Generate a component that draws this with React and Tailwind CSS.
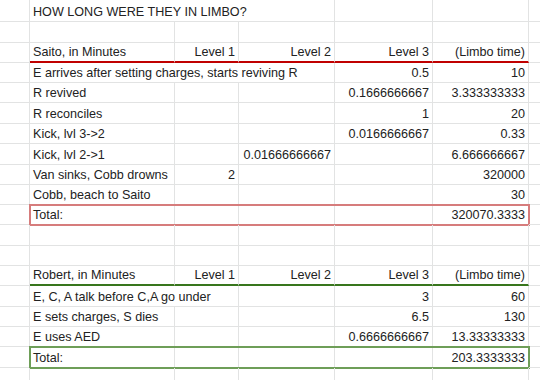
import clsx from "clsx";

// column widths incl. the 1px right gridline
const A = "w-[30px]";
const B = "w-[145px]";
const C = "w-[64px]";
const D = "w-[96px]";
const E = "w-[98px]";
const F = "w-[96px]";
const G = "w-[60px]";

function Cell({ w, right, className = "", children }) {
  return (
    <div
      className={clsx(
        "flex shrink-0 items-end overflow-hidden whitespace-nowrap border-b border-r border-[#e2e3e3] px-[3px] pb-px leading-[15px]",
        w,
        right && "justify-end",
        className
      )}
    >
      {children}
    </div>
  );
}

function Row({ h, children }) {
  return <div className={clsx("flex", h)}>{children}</div>;
}

function EmptyRow({ h }) {
  return (
    <Row h={h}>
      <Cell w={A} />
      <Cell w={B} />
      <Cell w={C} />
      <Cell w={D} />
      <Cell w={E} />
      <Cell w={F} />
      <Cell w={G} />
    </Row>
  );
}

function HeaderRow({ h, title, line }) {
  return (
    <Row h={h}>
      <Cell w={A} />
      <Cell w={B} className={line}>{title}</Cell>
      <Cell w={C} right className={line}>Level 1</Cell>
      <Cell w={D} right className={line}>Level 2</Cell>
      <Cell w={E} right className={line}>Level 3</Cell>
      <Cell w={F} right className={line}>(Limbo time)</Cell>
      <Cell w={G} />
    </Row>
  );
}

function DataRow({ h, label, span, l1, l2, l3, limbo }) {
  return (
    <Row h={h}>
      <Cell w={A} />
      {span === "BD" && <Cell w="w-[305px]">{label}</Cell>}
      {span === "BC" && (
        <>
          <Cell w="w-[209px]">{label}</Cell>
          <Cell w={D} right>{l2}</Cell>
        </>
      )}
      {!span && (
        <>
          <Cell w={B}>{label}</Cell>
          <Cell w={C} right>{l1}</Cell>
          <Cell w={D} right>{l2}</Cell>
        </>
      )}
      <Cell w={E} right>{l3}</Cell>
      <Cell w={F} right>{limbo}</Cell>
      <Cell w={G} />
    </Row>
  );
}

function TotalRow({ h, value, ring }) {
  return (
    <Row h={h}>
      <Cell w={A} />
      <div className={clsx("flex outline-2 -outline-offset-1", ring)}>
        <Cell w={B}>Total:</Cell>
        <Cell w={C} />
        <Cell w={D} />
        <Cell w={E} />
        <Cell w={F} right>{value}</Cell>
      </div>
      <Cell w={G} />
    </Row>
  );
}

export default function App() {
  const red = "border-b-2 border-b-[#c00000]";
  const green = "border-b-2 border-b-[#38761d]";
  return (
    <div className="h-[380px] w-[540px] overflow-hidden bg-white font-['Liberation_Sans',Arial,sans-serif] text-[12.6px] text-[#222]">
      {/* title */}
      <Row h="h-[22px]">
        <Cell w={A} />
        <Cell w="w-[305px]">HOW LONG WERE THEY IN LIMBO?</Cell>
        <Cell w={E} />
        <Cell w={F} />
        <Cell w={G} />
      </Row>
      <EmptyRow h="h-[21px]" />

      {/* Saito */}
      <HeaderRow h="h-[20px]" title="Saito, in Minutes" line={red} />
      <DataRow h="h-[20px]" span="BD" label="E arrives after setting charges, starts reviving R" l3="0.5" limbo="10" />
      <DataRow h="h-[20px]" label="R revived" l3="0.1666666667" limbo="3.333333333" />
      <DataRow h="h-[21px]" label="R reconciles" l3="1" limbo="20" />
      <DataRow h="h-[20px]" label="Kick, lvl 3->2" l3="0.0166666667" limbo="0.33" />
      <DataRow h="h-[21px]" label="Kick, lvl 2->1" l2="0.01666666667" limbo="6.666666667" />
      <DataRow h="h-[20px]" label="Van sinks, Cobb drowns" l1="2" limbo="320000" />
      <DataRow h="h-[20px]" label="Cobb, beach to Saito" limbo="30" />
      <TotalRow h="h-[20px]" value="320070.3333" ring="outline-[#d67c7c]" />

      <EmptyRow h="h-[21px]" />
      <EmptyRow h="h-[20px]" />

      {/* Robert */}
      <HeaderRow h="h-[20px]" title="Robert, in Minutes" line={green} />
      <DataRow h="h-[21px]" span="BC" label="E, C, A talk before C,A go under" l3="3" limbo="60" />
      <DataRow h="h-[20px]" label="E sets charges, S dies" l3="6.5" limbo="130" />
      <DataRow h="h-[20px]" label="E uses AED" l3="0.6666666667" limbo="13.33333333" />
      <TotalRow h="h-[21px]" value="203.3333333" ring="outline-[#6e9e58]" />

      <EmptyRow h="h-[21px]" />
    </div>
  );
}
